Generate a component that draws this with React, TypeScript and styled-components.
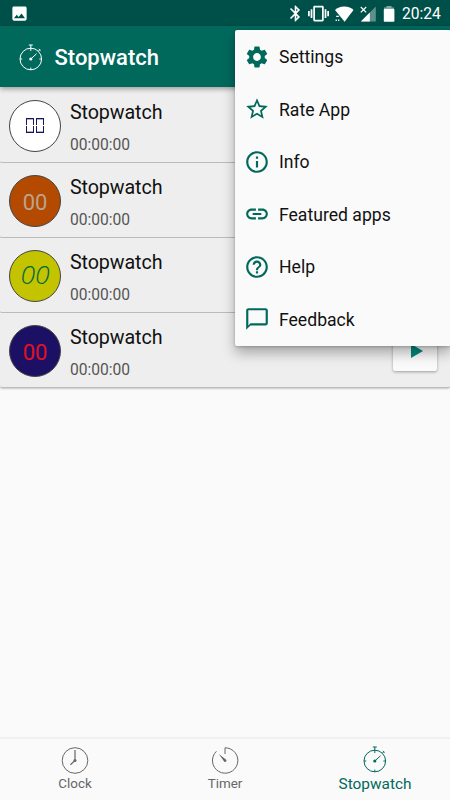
import React from "react";
import styled, { createGlobalStyle } from "styled-components";
import {
  MdSettings,
  MdStarBorder,
  MdInfoOutline,
  MdLink,
  MdHelpOutline,
  MdChatBubbleOutline,
  MdBluetooth,
  MdVibration,
  MdImage,
} from "react-icons/md";

const GlobalStyle = createGlobalStyle`
  *, *::before, *::after { box-sizing: border-box; }
  body { margin: 0; font-family: Roboto, "Liberation Sans", sans-serif; background: #fafafa; }
  svg { display: block; flex: none; }
`;

const Screen = styled.div`
  position: relative;
  width: 450px;
  height: 800px;
  display: flex;
  flex-direction: column;
  overflow: hidden;
  background: #fafafa;
`;

const StatusBar = styled.div`
  height: 26px;
  flex: none;
  display: flex;
  align-items: center;
  justify-content: space-between;
  padding: 1px 9px 0 10px;
  background: #00504a;
  color: #fff;
`;

const StatusIcons = styled.div`
  display: flex;
  align-items: center;
`;

const IconSlot = styled.span<{ $gap: number }>`
  display: block;
  margin-left: ${(p) => p.$gap}px;
`;

const Time = styled.span`
  margin-left: 7px;
  font-size: 15.6px;
  line-height: 26px;
  width: 39px;
  white-space: nowrap;
  padding-top: 1px;
`;

const Header = styled.header`
  position: relative;
  height: 61px;
  flex: none;
  display: flex;
  align-items: center;
  padding-left: 18px;
  background: #00695c;
  color: #fff;
  box-shadow: 0 2px 5px rgba(0, 0, 0, 0.35);
`;

const Title = styled.h1`
  margin: 3px 0 0 10.5px;
  font-size: 22px;
  font-weight: 500;
  line-height: 30px;
`;

const List = styled.main`
  flex: 1;
`;

const Row = styled.section`
  height: 75px;
  display: flex;
  align-items: center;
  padding: 1px 13px 0 9px;
  background: #eeeeee;
  border-bottom: 1px solid #bdbdbd;
  border-radius: 0 0 2px 2px;
  box-shadow: 0 1px 2px rgba(0, 0, 0, 0.2);
  &:first-child { height: 76px; padding-top: 2px; }
`;

const Badge = styled.div<{ $bg: string; $fg: string; $slant?: boolean }>`
  width: 52px;
  height: 52px;
  flex: none;
  display: flex;
  align-items: center;
  justify-content: center;
  gap: 2px;
  border-radius: 50%;
  border: 1px solid #444;
  background: ${(p) => p.$bg};
  color: ${(p) => p.$fg};
  font-size: ${(p) => (p.$slant ? "26.5px" : "22px")};
  font-style: ${(p) => (p.$slant ? "italic" : "normal")};
  font-weight: ${(p) => (p.$slant ? 300 : 400)};
  font-family: ${(p) => (p.$slant ? '"Open Sans"' : "Roboto")}, sans-serif;
  line-height: 1;
  padding-top: ${(p) => (p.$slant ? "0" : "4px")};
  padding-bottom: ${(p) => (p.$slant ? "2px" : "0")};
`;

const LcdDigit = styled.i`
  width: 8px;
  height: 15px;
  margin-top: -4px;
  display: grid;
  grid-template-rows: 7px 7px;
  row-gap: 1px;
  &::before, &::after { content: ""; border: 1px solid #17175c; }
  &::before { border-bottom: 0; box-shadow: inset 0 1px rgba(23, 23, 92, 0.35); }
  &::after { border-top: 0; box-shadow: inset 0 -1px rgba(23, 23, 92, 0.35); }
`;

const RowText = styled.div`
  flex: 1;
  margin-left: 9px;
  padding-top: 4px;
`;

const RowTitle = styled.div`
  font-size: 19.7px;
  line-height: 24px;
  letter-spacing: -0.1px;
  color: #111;
`;

const RowTime = styled.div`
  margin-top: 10px;
  font-size: 15.6px;
  line-height: 20px;
  color: #555;
`;

const PlayButton = styled.button`
  width: 44px;
  height: 44px;
  padding: 4px 0 0 3px;
  margin-top: -3px;
  display: flex;
  align-items: center;
  justify-content: center;
  border: 0;
  border-radius: 2px;
  background: #fafafa;
  box-shadow: 0 1px 3px rgba(0, 0, 0, 0.35);
`;

const Menu = styled.nav`
  position: absolute;
  top: 30px;
  left: 235px;
  width: 216px;
  height: 316px;
  padding-top: 1px;
  border-radius: 2px;
  background: #fafafa;
  box-shadow: 0 7px 13px rgba(0, 0, 0, 0.3), 0 1px 3px rgba(0, 0, 0, 0.2);
`;

const MenuItem = styled.div`
  height: 52.5px;
  display: flex;
  align-items: center;
  gap: 9px;
  padding-left: 9px;
  font-size: 17.6px;
  color: #111;
  svg { color: #00695c; margin-top: -1px; }
`;

const TabBar = styled.footer`
  height: 63px;
  flex: none;
  display: grid;
  grid-template-columns: repeat(3, 1fr);
  border-top: 2px solid #f0f0f0;
  background: #fafafa;
`;

const Tab = styled.div<{ $active?: boolean }>`
  display: flex;
  flex-direction: column;
  align-items: center;
  padding-top: ${(p) => (p.$active ? "6px" : "8px")};
  color: ${(p) => (p.$active ? "#00695c" : "#666")};
  font-size: ${(p) => (p.$active ? "15.4px" : "13.4px")};
  line-height: 18px;
`;

const TabLabel = styled.span<{ $active?: boolean }>`
  margin-top: ${(p) => (p.$active ? "2px" : "0")};
`;

const StopwatchIcon = () => (
  <svg width="26" height="28" viewBox="0 0 26 28" fill="none" stroke="currentColor">
    <circle cx="12.8" cy="16" r="10.8" />
    <path d="M12.8 2V8M10.8 2h4M20.4 8.2l1.4-1.5M20.8 6l1.8 1.7M12.8 24.6V27M2 16h2.2M21.4 16h2.2" />
    <path d="M12.8 16l5.8-5.3" />
    <circle cx="12.8" cy="16" r="1.6" fill="currentColor" stroke="none" />
  </svg>
);

const ClockIcon = () => (
  <svg width="28" height="28" viewBox="0 0 28 28" fill="none" stroke="currentColor">
    <circle cx="14" cy="13.5" r="12.8" />
    <path d="M14 13.5V3M14 13.5l-4.6 4.2" strokeWidth="1.2" />
    <circle cx="14" cy="13.5" r="1.5" fill="currentColor" stroke="none" />
  </svg>
);

const TimerIcon = () => (
  <svg width="28" height="28" viewBox="0 0 28 28" fill="none" stroke="currentColor">
    <path d="M14 7V0.8a12.7 12.7 0 1 1-8.6 3.5" />
    <path d="M7.8 7l7.4 5.7a1.4 1.4 0 0 1-1.9 2z" fill="currentColor" stroke="none" />
  </svg>
);

const WifiIcon = () => (
  <svg width="20" height="18" viewBox="0 0 20 18" fill="currentColor">
    <path d="M1 5.1C3.4 3 6.2 1.6 10.3 1.6S17.3 3 19.5 5.1L10.6 16.8z" />
    <path d="M2.2 10.8h2.6v1.3H2.2zM1.6 14.4h1.3v1.6H1.6zM4 14.4h1.3v1.6H4z" />
  </svg>
);

const SignalIcon = () => (
  <svg width="18" height="18" viewBox="0 0 18 18">
    <path d="M16.8 1.5v15H2z" fill="#5d8f8b" />
    <path d="M10.8 7.5v9H1.8z" fill="#fff" />
    <path d="M1.8 2l5.4 5.4M7.2 2L1.8 7.4" stroke="#fff" strokeWidth="1.2" />
  </svg>
);

const BatteryIcon = () => (
  <svg width="12" height="18" viewBox="0 0 12 18">
    <path d="M3.5 1h5v1.5H11V5H1V2.5h2.5z" fill="#7fa9a5" />
    <rect x="0.8" y="4" width="10.6" height="12.8" rx="0.8" fill="#fff" />
  </svg>
);

const PlayIcon = () => (
  <svg width="12" height="14" viewBox="0 0 12 14">
    <path d="M0 0l12 7-12 7z" fill="#00897b" />
  </svg>
);

const stopwatches = [
  { bg: "#ffffff", fg: "#17175c", lcd: true },
  { bg: "#b34a00", fg: "#bda28e" },
  { bg: "#c3c300", fg: "#006a3c", slant: true },
  { bg: "#1c1065", fg: "#e01028" },
];

const menuItems = [
  { label: "Settings", Icon: MdSettings },
  { label: "Rate App", Icon: MdStarBorder },
  { label: "Info", Icon: MdInfoOutline },
  { label: "Featured apps", Icon: MdLink },
  { label: "Help", Icon: MdHelpOutline },
  { label: "Feedback", Icon: MdChatBubbleOutline },
];

export default function App() {
  return (
    <Screen>
      <GlobalStyle />
      <StatusBar>
        <MdImage size={19} />
        <StatusIcons>
          <MdBluetooth size={19} />
          <IconSlot $gap={3}><MdVibration size={21} /></IconSlot>
          <IconSlot $gap={5}><WifiIcon /></IconSlot>
          <IconSlot $gap={5}><SignalIcon /></IconSlot>
          <IconSlot $gap={6}><BatteryIcon /></IconSlot>
          <Time>20:24</Time>
        </StatusIcons>
      </StatusBar>
      <Header>
        <StopwatchIcon />
        <Title>Stopwatch</Title>
      </Header>
      <List>
        {stopwatches.map((s, i) => (
          <Row key={i}>
            <Badge $bg={s.bg} $fg={s.fg} $slant={s.slant}>
              {s.lcd ? <><LcdDigit /><LcdDigit /></> : "00"}
            </Badge>
            <RowText>
              <RowTitle>Stopwatch</RowTitle>
              <RowTime>00:00:00</RowTime>
            </RowText>
            <PlayButton aria-label="Start"><PlayIcon /></PlayButton>
          </Row>
        ))}
      </List>
      <TabBar>
        <Tab><ClockIcon /><TabLabel>Clock</TabLabel></Tab>
        <Tab><TimerIcon /><TabLabel>Timer</TabLabel></Tab>
        <Tab $active><StopwatchIcon /><TabLabel $active>Stopwatch</TabLabel></Tab>
      </TabBar>
      <Menu>
        {menuItems.map(({ label, Icon }) => (
          <MenuItem key={label}><Icon size={26} />{label}</MenuItem>
        ))}
      </Menu>
    </Screen>
  );
}
